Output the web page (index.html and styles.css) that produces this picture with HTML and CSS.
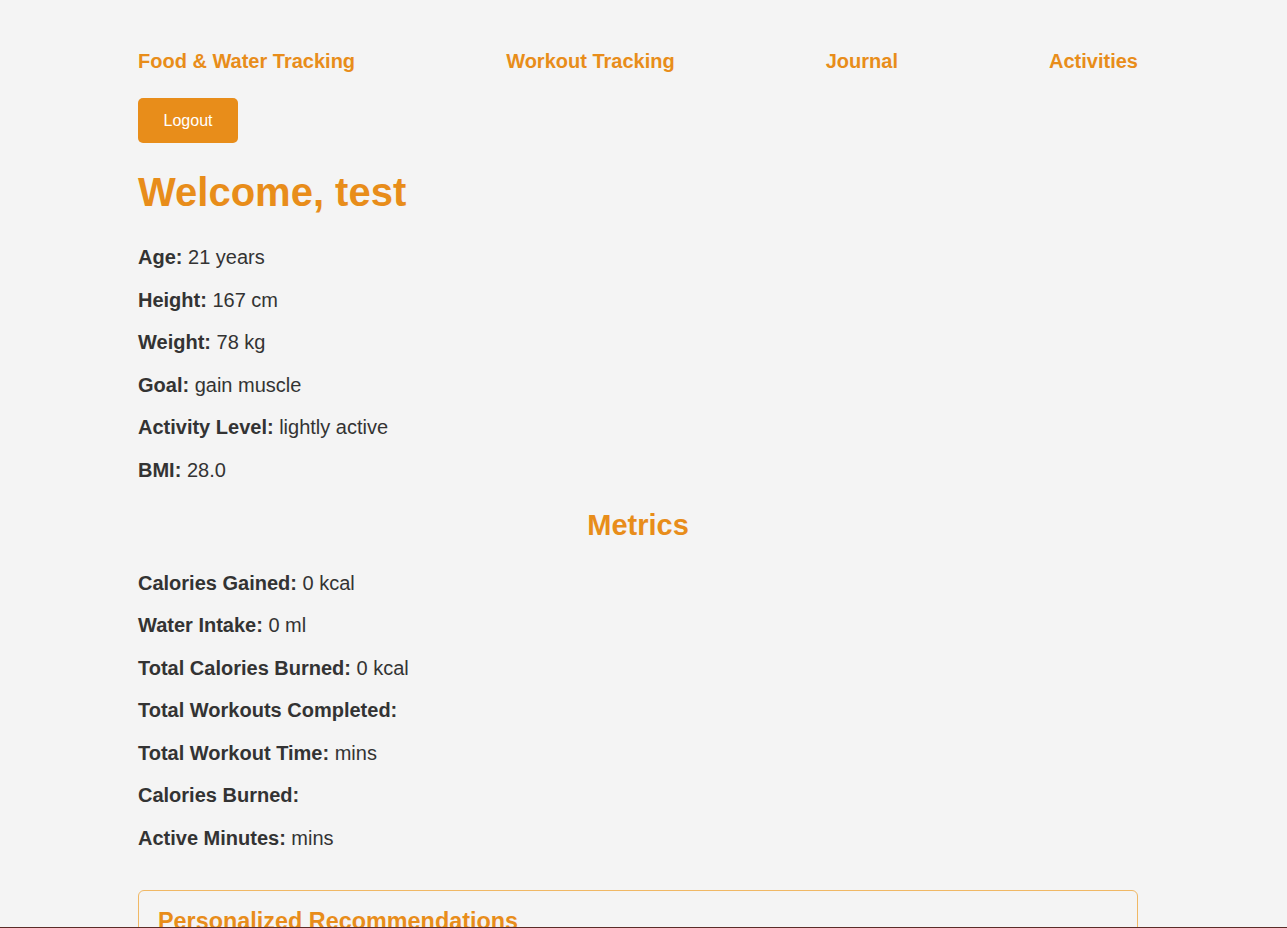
FILE: index.html
```html
<!DOCTYPE html>
<html lang="en">
<head>
<meta charset="utf-8">
<title>Dashboard</title>
<link rel="stylesheet" href="styles.css">
</head>
<body>
<div class="container">
  <nav class="nav">
    <a href="#" class="nav-link">Food &amp; Water Tracking</a>
    <a href="#" class="nav-link">Workout Tracking</a>
    <a href="#" class="nav-link">Journal</a>
    <a href="#" class="nav-link">Activities</a>
  </nav>
  <button class="logout">Logout</button>
  <h1 class="welcome">Welcome, test</h1>
  <section class="profile">
    <p><strong>Age:</strong> 21 years</p>
    <p><strong>Height:</strong> 167 cm</p>
    <p><strong>Weight:</strong> 78 kg</p>
    <p><strong>Goal:</strong> gain muscle</p>
    <p><strong>Activity Level:</strong> lightly active</p>
    <p><strong>BMI:</strong> 28.0</p>
  </section>
  <h2 class="section-title">Metrics</h2>
  <section class="metrics">
    <p><strong>Calories Gained:</strong> 0 kcal</p>
    <p><strong>Water Intake:</strong> 0 ml</p>
    <p><strong>Total Calories Burned:</strong> 0 kcal</p>
    <p><strong>Total Workouts Completed:</strong> </p>
    <p><strong>Total Workout Time:</strong>  mins</p>
    <p><strong>Calories Burned:</strong> </p>
    <p><strong>Active Minutes:</strong>  mins</p>
  </section>
  <section class="recs">
    <h3 class="recs-title">Personalized Recommendations</h3>
  </section>
</div>
<div class="footer-edge"></div>
</body>
</html>
```

FILE: styles.css
```css
html, body {
  margin: 0;
  padding: 0;
  background: #f4f4f4;
}

body {
  font-family: "Liberation Sans", Arial, sans-serif;
  font-size: 20px;
  color: #333333;
}

.container {
  width: 1000px;
  margin: 0 0 0 138px;
  padding-top: 50px;
}

.nav {
  display: flex;
  justify-content: space-between;
  align-items: center;
  height: 23px;
  line-height: 23px;
}

.nav-link {
  color: #e88d1a;
  font-weight: bold;
  font-size: 20px;
  text-decoration: none;
}

.logout {
  display: block;
  margin-top: 25px;
  width: 100px;
  height: 45px;
  padding: 0;
  border: none;
  border-radius: 5px;
  background: #e88d1a;
  color: #ffffff;
  font-family: "Liberation Sans", Arial, sans-serif;
  font-size: 16px;
  cursor: pointer;
}

.welcome {
  color: #e88d1a;
  font-size: 40px;
  line-height: 46px;
  margin: 26px 0 26px;
}

.profile p,
.metrics p {
  margin: 10.5px 0;
  line-height: 32px;
}

.profile p:first-child {
  margin-top: 0;
}

.section-title {
  color: #e88d1a;
  font-size: 29px;
  line-height: 34px;
  text-align: center;
  margin: 22px 0 25px;
}

.metrics p:first-child {
  margin-top: 0;
}

.recs {
  margin-top: 36px;
  border: 1px solid #f0b865;
  border-radius: 6px;
  padding: 17px 19px 20px;
}

.recs-title {
  color: #e88d1a;
  font-size: 23.4px;
  line-height: 27px;
  margin: 0 0 16px;
}

.footer-edge {
  position: fixed;
  left: 0;
  right: 0;
  bottom: 0;
  height: 1px;
  background: #5b2c28;
}
```
